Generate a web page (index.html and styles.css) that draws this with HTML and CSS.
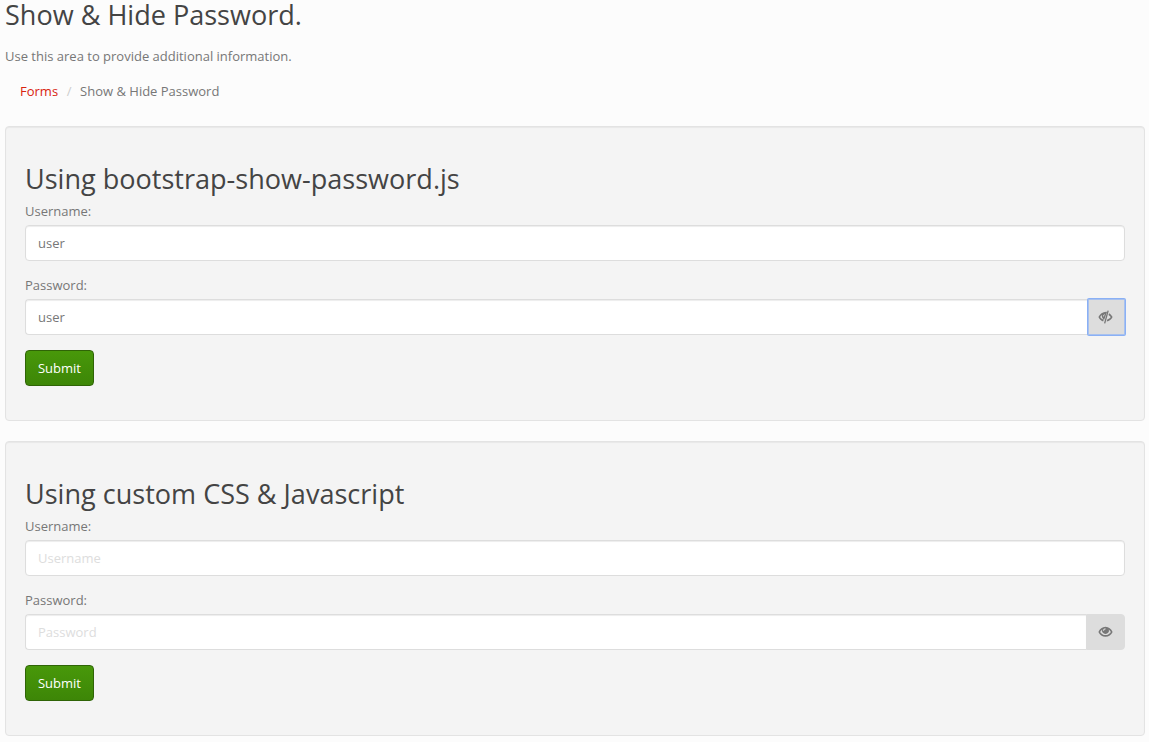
FILE: index.html
```
<!DOCTYPE html>
<html lang="en">
<head>
<meta charset="utf-8">
<title>Show &amp; Hide Password</title>
<link rel="stylesheet" href="styles.css">
</head>
<body>
<header>
<h1>Show &amp; Hide Password.</h1>
<p class="intro">Use this area to provide additional information.</p>
<nav class="breadcrumb"><a href="#">Forms</a><span class="sep">/</span><span>Show &amp; Hide Password</span></nav>
</header>
<main>
<section class="well">
<h2>Using bootstrap-show-password.js</h2>
<form>
<label for="u1">Username:</label>
<input class="field" id="u1" type="text" value="user">
<label for="p1">Password:</label>
<div class="group">
<input class="field" id="p1" type="text" value="user">
<button class="toggle focused" type="button" aria-label="Hide password"><svg width="15" height="14" viewBox="0 0 15 14"><path d="M9 1.900C5 1.500 2 4 .4 7c1 2 2.600 3.700 4.700 4.500L5.800 9.800C4.200 9.300 3 8.400 2.200 7c.4-.8.900-1.400 1.600-2C3.600 7 4.500 9 6.200 9.700zM6.900 4.300C5.800 4.500 5.100 5.200 5.100 6.400h.8c0-.7.3-1.100.9-1.300z" fill-rule="evenodd"/><path d="M9.500.4l1.300.4L7.300 13.600l-1.300-.4zM11.100 3.200c1.500.9 2.700 2.200 3.500 3.800-1.300 2.400-3.200 4-5.900 4.400l.6-1.900c1.500-.4 2.600-1.200 3.400-2.500-.6-.9-1.300-1.600-2.200-2.100z"/></svg></button>
</div>
<button class="submit" type="button">Submit</button>
</form>
</section>
<section class="well">
<h2>Using custom CSS &amp; Javascript</h2>
<form>
<label for="u2">Username:</label>
<input class="field" id="u2" type="text" placeholder="Username">
<label for="p2">Password:</label>
<div class="group">
<input class="field" id="p2" type="password" placeholder="Password">
<button class="toggle" type="button" aria-label="Show password"><svg width="15" height="14" viewBox="0 0 15 14"><path fill-rule="evenodd" d="M7.500 1.800C10.700 1.800 13.200 4 14.600 7 13.200 10 10.700 11.700 7.500 11.700S1.800 10 .4 7C1.800 4 4.300 1.800 7.500 1.800zM4.200 4.400C3.400 5.100 2.700 6 2.100 7c1.300 1.900 3.100 3.100 5.400 3.100S11.600 8.900 12.900 7c-.6-1-1.300-1.900-2.100-2.600a3.500 3.500 0 1 1-6.600 0zM7.500 3.300C6 3.300 5 4.300 5 5.800H6.100c0-.9.5-1.400 1.400-1.400z"/></svg></button>
</div>
<button class="submit" type="button">Submit</button>
</form>
</section>
</main>
</body>
</html>
```
FILE: styles.css
```
* { box-sizing: border-box; }
body { margin: 0; padding: 0 4px 0 5px; background: #fcfcfc; color: #777; font: 13px/20px "Open Sans", sans-serif; }
h1, h2 { margin: 0; color: #444; font-size: 27.050px; line-height: 28px; font-weight: 400; }
h1 { height: 29px; line-height: 29px; }
.intro { margin: 17px 0 0; }
.breadcrumb { margin-top: 15px; padding-left: 15px; display: flex; }
.breadcrumb a { color: #d9230f; text-decoration: none; }
.sep { width: 22px; text-align: center; color: #ccc; }
.well { height: 295px; margin: 25px 0 20px; padding: 38px 19px 19px; border: 1px solid #e3e3e3; border-radius: 4px; background: #f4f4f4; box-shadow: inset 0 1px 1px rgba(0,0,0,.05); }
.well + .well { margin-top: 20px; }
form { display: flex; flex-direction: column; align-items: stretch; padding-top: 1px; }
label { margin: 7px 0 4px; }
.field { display: block; width: 100%; min-width: 0; height: 36px; margin: 0 0 7px; padding: 6px 12px; border: 1px solid #ddd; border-radius: 4px; background: #fff; color: #777; font: 13px/20px "Open Sans", sans-serif; box-shadow: inset 0 1px 1px rgba(0,0,0,.075); outline: 0; }
.field::placeholder { color: #ddd; opacity: 1; }
.group { display: flex; margin-bottom: 15px; }
.group .field { flex: 1; margin: 0; border-radius: 4px 0 0 4px; border-right: 0; }
.toggle { display: flex; align-items: center; justify-content: center; width: 39px; height: 36px; padding: 0 1px 0 0; border: 1px solid #ddd; border-radius: 0 4px 4px 0; background: #ddd; }
.toggle svg { fill: #777; }
.focused { width: 37px; padding-right: 2px; border-color: #a8c1ee; border-radius: 1px; box-shadow: 0 0 0 1px #8ab0f5; outline: 0; }
.submit { align-self: flex-start; width: 69px; height: 36px; padding: 0; border: 1px solid #2f6406; border-radius: 4px; background: linear-gradient(#48980a, #3d8607); color: #fff; font: 13px/20px "Open Sans", sans-serif; }
```
